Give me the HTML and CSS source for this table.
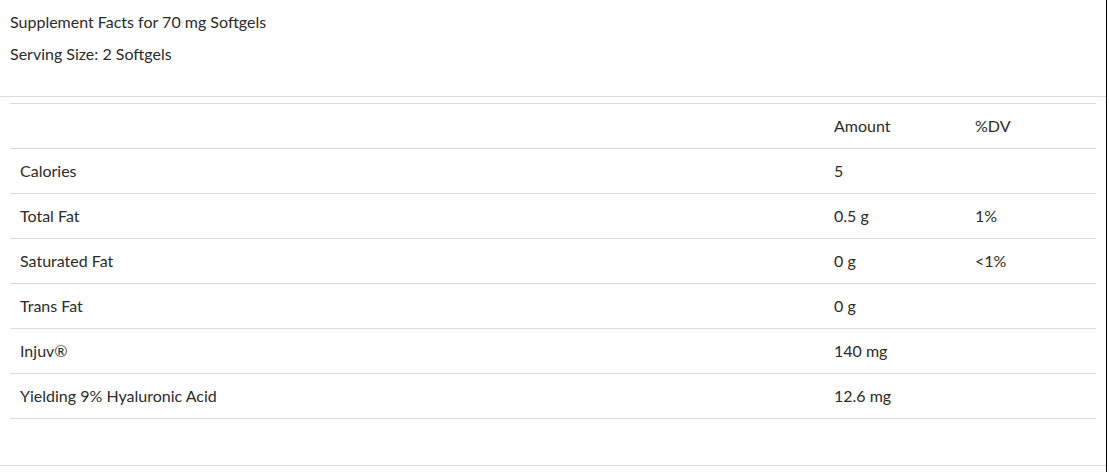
FILE: index.html
```html
<!DOCTYPE html>
<html lang="en">
<head>
<meta charset="utf-8">
<title>Supplement Facts</title>
<link rel="stylesheet" href="styles.css">
</head>
<body>
<div class="panel">
  <div class="facts-head">
    <p class="facts-title">Supplement Facts for 70 mg Softgels</p>
    <p class="facts-serving">Serving Size: 2 Softgels</p>
  </div>
  <div class="facts-body">
    <table class="facts-table">
      <thead>
        <tr><th class="c-name"></th><th class="c-amt">Amount</th><th class="c-dv">%DV</th></tr>
      </thead>
      <tbody>
        <tr><td>Calories</td><td>5</td><td></td></tr>
        <tr><td>Total Fat</td><td>0.5 g</td><td>1%</td></tr>
        <tr><td>Saturated Fat</td><td>0 g</td><td>&lt;1%</td></tr>
        <tr><td>Trans Fat</td><td>0 g</td><td></td></tr>
        <tr><td>Injuv®</td><td>140 mg</td><td></td></tr>
        <tr><td>Yielding 9% Hyaluronic Acid</td><td>12.6 mg</td><td></td></tr>
      </tbody>
    </table>
  </div>
</div>
</body>
</html>
```
FILE: styles.css
```css
html, body {
  margin: 0;
  padding: 0;
  background: #fff;
}
body {
  font-family: Lato, "Open Sans", Arial, sans-serif;
  font-size: 16px;
  color: #2b2b2b;
}
.panel {
  width: 1106px;
  height: 472px;
  border-right: 1px solid #000;
  box-sizing: content-box;
}
.facts-head {
  padding: 12px 10px 20px 10px;
  border-bottom: 1px solid #dcdcdc;
}
.facts-head p {
  margin: 0 0 12px 0;
  line-height: 20px;
}
.facts-body {
  padding: 6px 10px 46px 10px;
  border-bottom: 1px solid #dcdcdc;
}
.facts-table {
  width: 1086px;
  border-collapse: collapse;
  border-top: 1px solid #dcdcdc;
}
.facts-table th,
.facts-table td {
  text-align: left;
  font-weight: normal;
  padding: 0 10px;
  height: 44px;
  line-height: 20px;
  border-bottom: 1px solid #dcdcdc;
  vertical-align: middle;
}
.c-name { width: 794px; }
.c-amt { width: 121px; }
.c-dv { width: auto; }
```
